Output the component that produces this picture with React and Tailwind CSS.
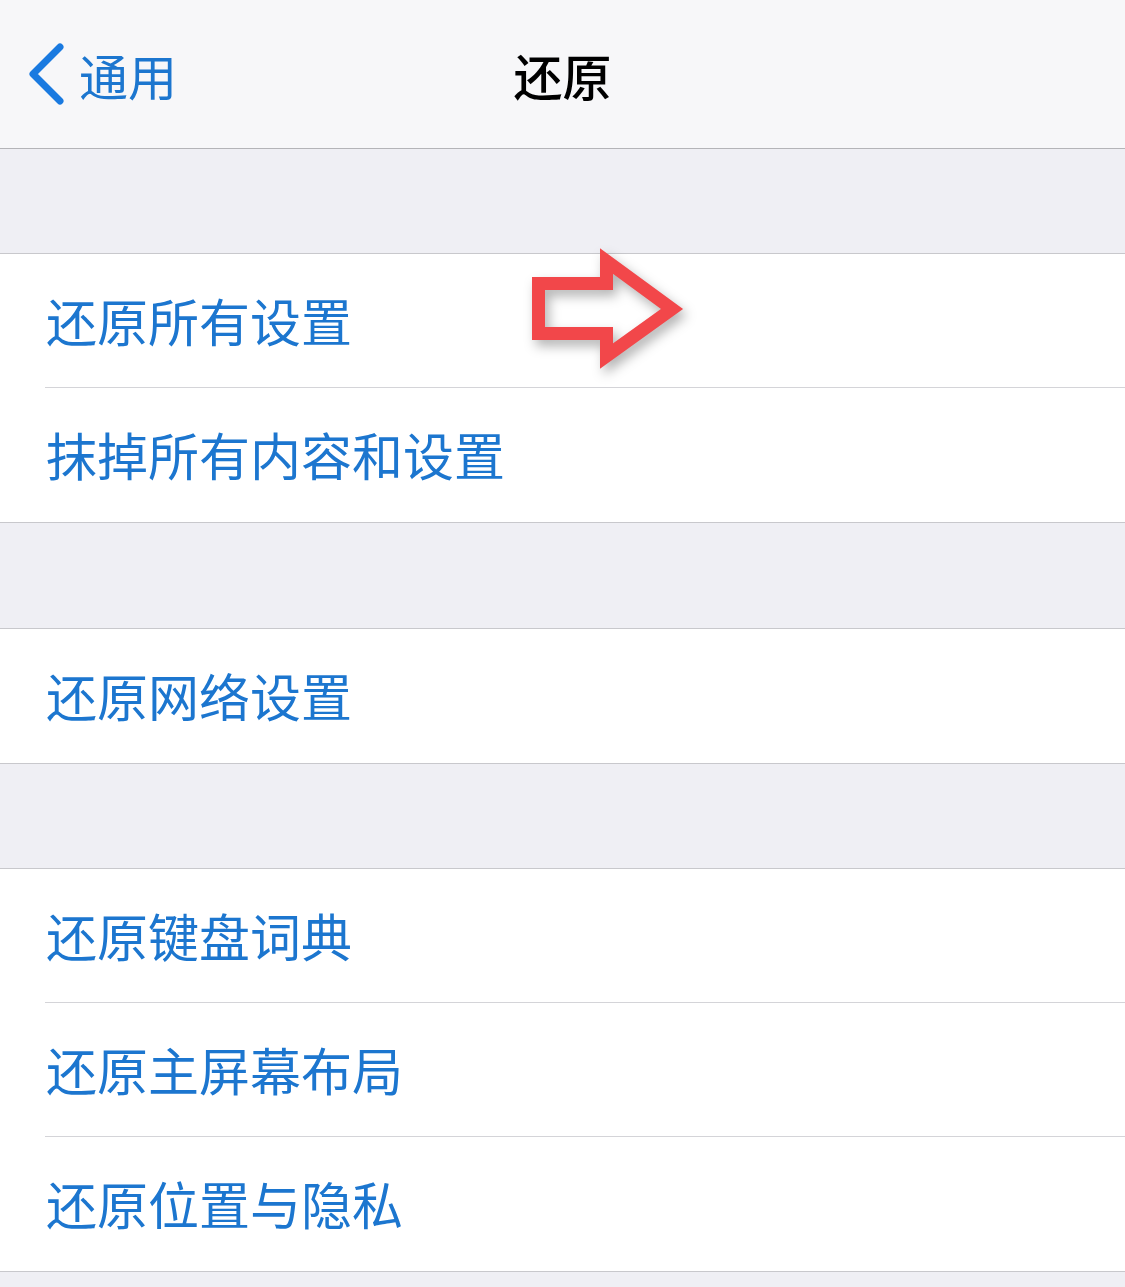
import React from 'react';

const FONT = { fontFamily: '"Noto Sans CJK SC", "Noto Sans", sans-serif' };

const Row = ({ label, last }) => (
  <div className="relative h-[134px] bg-white">
    <div className="flex h-[133px] items-center pl-[46px] text-[51px] leading-none text-[#1c76cf]">
      {label}
    </div>
    {!last && <div className="ml-[45px] h-px bg-[#d4d4d8]" />}
  </div>
);

const Group = ({ items }) => (
  <div className="border-y border-[#c8c8cc] bg-white">
    {items.map((label, i) => (
      <Row key={label} label={label} last={i === items.length - 1} />
    ))}
  </div>
);

const Arrow = () => (
  <svg
    className="pointer-events-none absolute left-[524px] top-[240px] drop-shadow-[4px_6px_6px_rgba(0,0,0,0.3)]"
    width="170"
    height="140"
    viewBox="524 240 170 140"
  >
    <polygon
      points="538.5,283.5 606.5,283.5 606.5,261 672,309 606.5,356 606.5,333.5 538.5,333.5"
      fill="none"
      stroke="#f2474a"
      strokeWidth="13"
      strokeLinejoin="miter"
    />
  </svg>
);

export default function App() {
  return (
    <div className="relative min-h-[1287px] w-[1125px] bg-[#efeff4]" style={FONT}>
      {/* nav bar */}
      <div className="grid h-[149px] grid-cols-[1fr_auto_1fr] items-center border-b border-[#b4b4b8] bg-[#f7f7f9]">
        <div className="flex items-center pl-[26px]">
          <svg width="40" height="64" viewBox="0 0 40 64">
            <path d="M34 5 L7 32 L34 59" fill="none" stroke="#1a7ae0" strokeWidth="7" strokeLinecap="round" strokeLinejoin="round" />
          </svg>
          <span className="ml-[13px] text-[49px] leading-none text-[#1c76cf]">通用</span>
        </div>
        <span className="text-[49px] font-medium leading-none text-black">还原</span>
        <div />
      </div>

      <div className="h-[104px]" />
      <Group items={['还原所有设置', '抹掉所有内容和设置']} />
      <div className="h-[105px]" />
      <Group items={['还原网络设置']} />
      <div className="h-[104px]" />
      <Group items={['还原键盘词典', '还原主屏幕布局', '还原位置与隐私']} />

      <Arrow />
    </div>
  );
}
